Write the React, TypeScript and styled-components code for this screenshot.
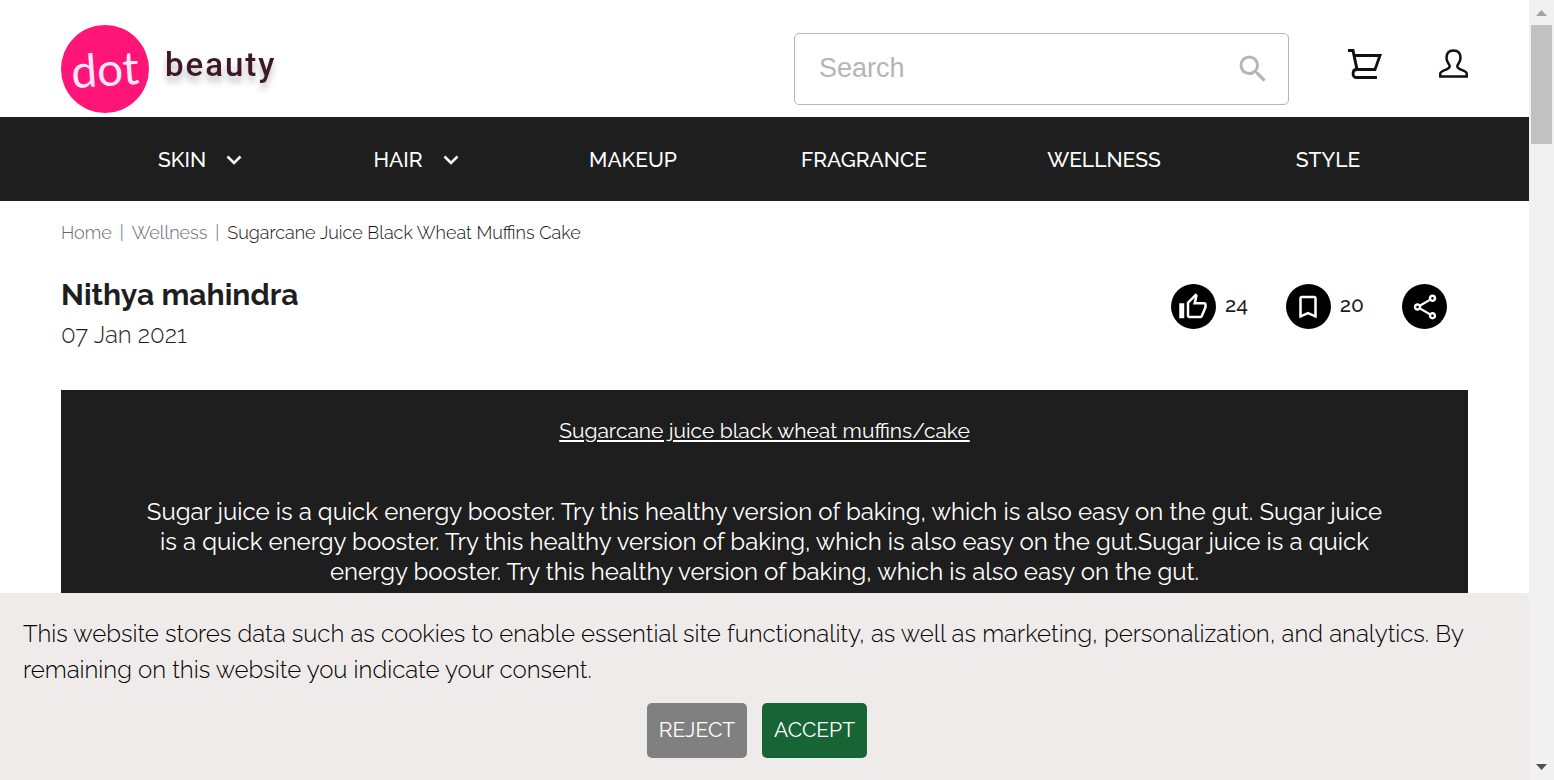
import React from "react";
import styled, { createGlobalStyle } from "styled-components";

const GlobalStyle = createGlobalStyle`
  *, *::before, *::after { box-sizing: border-box; }
  body { margin: 0; background: #fff; color: #1e1e1e; font-family: Raleway, Lato, sans-serif; }
  button, input { font-family: inherit; }
  a { color: inherit; text-decoration: none; }
`;

const Shell = styled.div`
  display: grid;
  grid-template-columns: minmax(0, 1fr) 25px;
  height: 100vh;
  overflow: hidden;
`;

const Page = styled.div`
  height: 100vh;
  overflow: hidden;
  display: flex;
  flex-direction: column;
`;

const Content = styled.div`
  flex: 1;
  min-height: 0;
  overflow: hidden;
`;

const Header = styled.header`
  display: flex;
  align-items: center;
  height: 117px;
  padding: 0 61px;
`;

const Brand = styled.a`
  display: flex;
  margin-top: 20px;
  margin-right: auto;
`;

const Search = styled.label`
  display: flex;
  align-items: center;
  width: 495px;
  height: 72px;
  margin-top: 20px;
  margin-bottom: 12px;
  padding: 0 17px 0 24px;
  border: 1px solid #b5b5b5;
  border-radius: 5px;
  color: #b5b5b5;
  align-self: flex-end;
`;

const SearchInput = styled.input`
  flex: 1;
  min-width: 0;
  height: 40px;
  padding: 0 0 2px;
  border: 0;
  outline: 0;
  background: none;
  font: 27px/36px "Liberation Sans", Arial, sans-serif;
  color: #1e1e1e;
  &::placeholder { color: #b5b5b5; opacity: 1; }
`;

const IconButton = styled.button`
  display: flex;
  padding: 0;
  margin-left: 56px;
  margin-top: 11px;
  border: 0;
  background: none;
  color: #111;
  cursor: pointer;
`;

const Nav = styled.nav`
  display: grid;
  grid-template-columns: 216fr 216fr 218fr 244fr 236fr 212fr;
  align-items: center;
  height: 84px;
  padding: 2px 95px 0 92px;
  background: #1e1e1e;
  color: #fff;
  font-size: 21px;
  line-height: 28px;
  font-weight: 500;
`;

const NavLink = styled.a`
  display: flex;
  align-items: center;
  justify-content: center;
  gap: 20px;
`;

const Breadcrumb = styled.nav`
  display: flex;
  gap: 8px;
  padding: 20px 61px 0;
  font-size: 18px;
  line-height: 24px;
  color: #66666e;
  font-weight: 350;
`;

const Current = styled.span`
  color: #111;
`;

const ArticleHead = styled.div`
  display: flex;
  justify-content: space-between;
  padding: 30px 82px 0 61px;
`;

const Author = styled.h1`
  margin: 0;
  font-size: 30px;
  line-height: 40px;
  font-weight: 700;
`;

const PostDate = styled.time`
  display: block;
  font-size: 24px;
  line-height: 40px;
  font-weight: 350;
`;

const Actions = styled.div`
  display: flex;
  align-items: flex-start;
  gap: 38px;
  padding-top: 9px;
`;

const Action = styled.div`
  display: flex;
  align-items: center;
  gap: 9px;
`;

const Count = styled.span`
  padding-bottom: 4px;
  font-size: 21px;
  line-height: 28px;
  font-weight: 500;
`;

const RoundButton = styled.button`
  display: flex;
  align-items: center;
  justify-content: center;
  width: 45px;
  height: 45px;
  padding: 0;
  border: 0;
  border-radius: 50%;
  background: #000;
  color: #fff;
  cursor: pointer;
`;

const Card = styled.article`
  margin: 35px 61px 0;
  padding: 26px 80px;
  min-height: 320px;
  background: #1e1e1e;
  color: #fff;
  text-align: center;
`;

const CardTitle = styled.h2`
  margin: 0 0 51px;
  font-size: 21px;
  line-height: 30px;
  font-weight: 400;
  text-decoration: underline;
`;

const CardText = styled.p`
  margin: 0;
  font-size: 24px;
  line-height: 30px;
`;

const CookieBar = styled.section`
  flex: none;
  padding: 23px 23px 22px;
  background: #efebea;
  color: #000;
`;

const CookieText = styled.p`
  margin: 0 0 15px;
  font-size: 24px;
  line-height: 36px;
  font-weight: 350;
`;

const CookieButtons = styled.div`
  display: flex;
  justify-content: center;
  gap: 15px;
  padding-right: 15px;
`;

const CookieButton = styled.button<{ $color: string; $width: number }>`
  width: ${(p) => p.$width}px;
  height: 55px;
  padding: 0 0 2px;
  border: 0;
  border-radius: 5px;
  background: ${(p) => p.$color};
  color: #fff;
  font-size: 21px;
  line-height: 28px;
  cursor: pointer;
`;

const ScrollTrack = styled.div`
  display: flex;
  flex-direction: column;
  align-items: center;
  background: #f1f1f1;
`;

const ScrollThumb = styled.div`
  width: 21px;
  height: 119px;
  margin-bottom: auto;
  background: #c1c1c1;
`;

const Arrow = ({ down = false }: { down?: boolean }) => (
  <svg width="25" height="25" viewBox="0 0 25 25" aria-hidden="true">
    {down ? <path d="M7 9h11l-5.500 6z" fill="#505050" /> : <path d="M7 16h11l-5.500-6z" fill="#a3a3a3" />}
  </svg>
);

const Logo = () => (
  <svg width="230" height="92" viewBox="0 0 230 92" role="img" aria-label="dot beauty">
    <circle cx="44" cy="46" r="44" fill="#ff1478" />
    <text
      x="44" y="63" textAnchor="middle" transform="rotate(-4 44 46)"
      fill="#fde6f5" fontFamily="Lato, sans-serif" fontSize="46" fontWeight="400"
    >
      dot
    </text>
    <text
      x="104" y="53" fill="#3d1826" fontFamily="Roboto, sans-serif" fontSize="33" fontWeight="500" letterSpacing="2"
      style={{ filter: "drop-shadow(0 6px 3px rgba(0,0,0,.25))" }}
    >
      beauty
    </text>
  </svg>
);

const Chevron = () => (
  <svg width="16" height="10" viewBox="0 0 16 10" fill="none" stroke="#fff" strokeWidth="2.500" aria-hidden="true">
    <path d="M1.500 1.500 8 8l6.500-6.500" />
  </svg>
);

const MdIcon = ({ size, d }: { size: number; d: string }) => (
  <svg width={size} height={size} viewBox="0 0 24 24" fill="currentColor" aria-hidden="true">
    <path d={d} />
  </svg>
);

const SEARCH = "M15.500 14h-.79l-.28-.27A6.471 6.471 0 0 0 16 9.500 6.500 6.500 0 1 0 9.500 16c1.610 0 3.090-.59 4.230-1.570l.27.28v.79l5 4.990L20.490 19l-4.990-5zm-6 0C7.010 14 5 11.990 5 9.500S7.010 5 9.500 5 14 7.010 14 9.500 11.990 14 9.500 14z";
const THUMB = "M9 21h9c.83 0 1.540-.5 1.840-1.220l3.020-7.050c.09-.23.14-.47.14-.73v-2c0-1.100-.9-2-2-2h-6.310l.95-4.570.03-.32c0-.41-.17-.79-.44-1.060L14.170 1 7.580 7.590C7.220 7.950 7 8.450 7 9v10c0 1.100.9 2 2 2zM9 9l4.340-4.340L12 10h9v2l-3 7H9V9zM1 9h4v12H1z";
const BOOKMARK = "M17 3H7c-1.100 0-2 .9-2 2v16l7-3 7 3V5c0-1.100-.9-2-2-2zm0 15-5-2.180L7 18V5h10v13z";
const SHARE = "M18 16.080c-.76 0-1.440.3-1.960.77L8.910 12.700c.05-.23.09-.46.09-.7s-.04-.47-.09-.7l7.050-4.110c.54.5 1.250.81 2.040.81 1.660 0 3-1.340 3-3s-1.340-3-3-3-3 1.340-3 3c0 .24.04.47.09.7L8.040 9.810C7.500 9.310 6.790 9 6 9c-1.660 0-3 1.340-3 3s1.340 3 3 3c.79 0 1.500-.31 2.040-.81l7.120 4.160c-.05.21-.08.43-.08.65 0 1.610 1.310 2.920 2.920 2.920s2.920-1.310 2.920-2.920-1.310-2.920-2.920-2.920zM18 4c.55 0 1 .45 1 1s-.45 1-1 1-1-.45-1-1 .45-1 1-1zM6 13c-.55 0-1-.45-1-1s.45-1 1-1 1 .45 1 1-.45 1-1 1zm12 7.020c-.55 0-1-.45-1-1s.45-1 1-1 1 .45 1 1-.45 1-1 1z";

const NAV = [
  { label: "SKIN", menu: true },
  { label: "HAIR", menu: true },
  { label: "MAKEUP" },
  { label: "FRAGRANCE" },
  { label: "WELLNESS" },
  { label: "STYLE" },
];

export default function App() {
  return (
    <Shell>
      <GlobalStyle />
      <Page>
        <Content>
          <Header>
            <Brand href="#"><Logo /></Brand>
            <Search>
              <SearchInput type="search" placeholder="Search" aria-label="Search" />
              <MdIcon size={36} d={SEARCH} />
            </Search>
            <IconButton aria-label="Cart">
              <svg width="38" height="32" viewBox="0 0 38 32" fill="none" stroke="currentColor" strokeWidth="3">
                <path d="M3 2.500h5L12 21.500" />
                <path d="M8.500 7.500H35L30 21.500H11.500c-4.500 0-4.500 8-.5 8H32" strokeWidth="2.800" />
              </svg>
            </IconButton>
            <IconButton aria-label="Account">
              <svg width="29" height="30" viewBox="0 0 29 30" fill="none" stroke="currentColor" strokeWidth="2.500">
                <path d="M1.300 27.500v-3c0-3.500 9.400-3.300 9.400-7.300 0-2.200-3.200-3.500-3.200-8.300 0-4.700 2.700-7.300 7-7.300s7 2.600 7 7.300c0 4.800-3.200 6.100-3.200 8.300 0 4 9.400 3.800 9.400 7.300v3z" />
              </svg>
            </IconButton>
          </Header>
          <Nav aria-label="Categories">
            {NAV.map((n) => (
              <NavLink href="#" key={n.label}>{n.label}{n.menu && <Chevron />}</NavLink>
            ))}
          </Nav>
          <Breadcrumb aria-label="Breadcrumb">
            <a href="#">Home</a><span>|</span><a href="#">Wellness</a><span>|</span>
            <Current>Sugarcane Juice Black Wheat Muffins Cake</Current>
          </Breadcrumb>
          <ArticleHead>
            <div>
              <Author>Nithya mahindra</Author>
              <PostDate dateTime="2021-01-07">07 Jan 2021</PostDate>
            </div>
            <Actions>
              <Action><RoundButton aria-label="Like"><MdIcon size={30} d={THUMB} /></RoundButton><Count>24</Count></Action>
              <Action><RoundButton aria-label="Save"><MdIcon size={30} d={BOOKMARK} /></RoundButton><Count>20</Count></Action>
              <Action><RoundButton aria-label="Share"><MdIcon size={30} d={SHARE} /></RoundButton></Action>
            </Actions>
          </ArticleHead>
          <Card>
            <CardTitle>Sugarcane juice black wheat muffins/cake</CardTitle>
            <CardText>
              Sugar juice is a quick energy booster. Try this healthy version of baking, which is also easy on the gut. Sugar juice
              is a quick energy booster. Try this healthy version of baking, which is also easy on the gut.Sugar juice is a quick
              energy booster. Try this healthy version of baking, which is also easy on the gut.
            </CardText>
          </Card>
        </Content>
        <CookieBar aria-label="Cookie consent">
          <CookieText>
            This website stores data such as cookies to enable essential site functionality, as well as marketing, personalization, and analytics. By
            remaining on this website you indicate your consent.
          </CookieText>
          <CookieButtons>
            <CookieButton $color="#808080" $width={100}>REJECT</CookieButton>
            <CookieButton $color="#176534" $width={105}>ACCEPT</CookieButton>
          </CookieButtons>
        </CookieBar>
      </Page>
      <ScrollTrack aria-hidden="true"><Arrow /><ScrollThumb /><Arrow down /></ScrollTrack>
    </Shell>
  );
}
